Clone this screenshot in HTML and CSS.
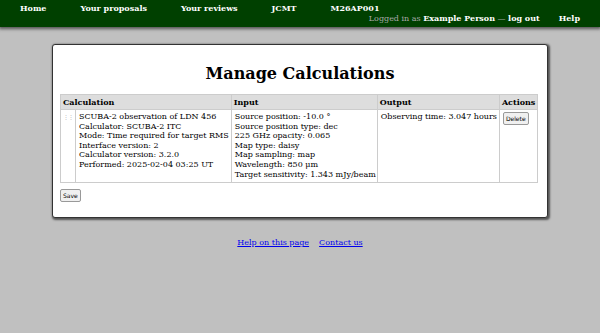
FILE: index.html
```html
<!DOCTYPE html>
<html>
<head>
<meta charset="utf-8">
<title>Manage Calculations</title>
<link rel="stylesheet" href="styles.css">
</head>
<body>
<header class="topbar">
  <nav class="nav-left">
    <a href="#">Home</a>
    <a href="#">Your proposals</a>
    <a href="#">Your reviews</a>
    <a href="#">JCMT</a>
    <a href="#">M26AP001</a>
  </nav>
  <nav class="nav-right">
    <span class="login">Logged in as <b>Example Person</b> — <a href="#">log out</a></span>
    <a href="#">Help</a>
  </nav>
</header>
<main class="panel">
  <h1 class="title">Manage Calculations</h1>
  <table class="calcs">
    <thead>
      <tr>
        <th colspan="2">Calculation</th>
        <th>Input</th>
        <th>Output</th>
        <th>Actions</th>
      </tr>
    </thead>
    <tbody>
      <tr>
        <td class="handle">⋮⋮</td>
        <td class="c-calc">SCUBA-2 observation of LDN 456<br>Calculator: SCUBA-2 ITC<br>Mode: Time required for target RMS<br>Interface version: 2<br>Calculator version: 3.2.0<br>Performed: 2025-02-04 03:25 UT</td>
        <td class="c-input">Source position: -10.0 °<br>Source position type: dec<br>225 GHz opacity: 0.065<br>Map type: daisy<br>Map sampling: map<br>Wavelength: 850 μm<br>Target sensitivity: 1.343 mJy/beam</td>
        <td class="c-output">Observing time: 3.047 hours</td>
        <td class="c-actions"><button class="btn">Delete</button></td>
      </tr>
    </tbody>
  </table>
  <div class="form-actions"><button class="btn btn-save">Save</button></div>
</main>
<footer class="footer">
  <a href="#">Help on this page</a>
  <a href="#">Contact us</a>
</footer>
</body>
</html>
```
FILE: styles.css
```css
html, body {
  margin: 0;
  padding: 0;
}
body {
  background: #c0c0c0;
  font-family: "DejaVu Serif", serif;
  font-size: 8px;
  color: #000;
}
.topbar {
  background: #004000;
  box-shadow: 0 1px 3px 1px #555;
  display: flex;
  flex-wrap: wrap;
  padding: 4px 20px 4px 20px;
  line-height: 9.5px;
}
.nav-left {
  display: flex;
  gap: 34px;
  font-weight: bold;
}
.nav-right {
  display: flex;
  gap: 19px;
  margin-left: auto;
  font-weight: bold;
}
.topbar a {
  color: #fff;
  text-decoration: none;
  font-weight: bold;
}
.login {
  color: #aaa;
  font-weight: normal;
}
.login b {
  color: #fff;
}
.panel {
  background: #fff;
  margin: 17px 52px 0 52px;
  border: 1px solid #333;
  border-radius: 3px;
  box-shadow: 1px 1px 2px 1px #555;
  padding: 1px 7px 15px 7px;
}
.title {
  text-align: center;
  font-size: 16px;
  font-weight: bold;
  margin: 18px 0 11px 0;
  line-height: 19px;
}
.calcs {
  border-collapse: collapse;
  font-size: 8px;
}
.calcs th {
  background: #dddddd;
  border: 1px solid #cccccc;
  text-align: left;
  padding: 2px 2px;
  line-height: 10px;
  font-weight: bold;
  white-space: nowrap;
}
.calcs td {
  border: 1px solid #cccccc;
  vertical-align: top;
  padding: 2px 2px 3px 3px;
  line-height: 9.6px;
  white-space: nowrap;
}
.calcs td.handle {
  color: #bbbbbb;
  font-size: 6px;
  width: 6px;
  padding: 2px 2px;
  letter-spacing: -1px;
  overflow: hidden;
}
.calcs td.c-input {
  padding-right: 1px;
}
.btn {
  font-family: "DejaVu Sans", sans-serif;
  font-size: 6px;
  background: #f0f0f0;
  border: 1px solid #999;
  border-radius: 2px;
  padding: 2px 2px;
  color: #000;
}
.form-actions {
  margin-top: 6px;
}
.footer {
  display: flex;
  justify-content: center;
  gap: 10px;
  margin-top: 20px;
}
.footer a {
  color: #00e;
}
```
